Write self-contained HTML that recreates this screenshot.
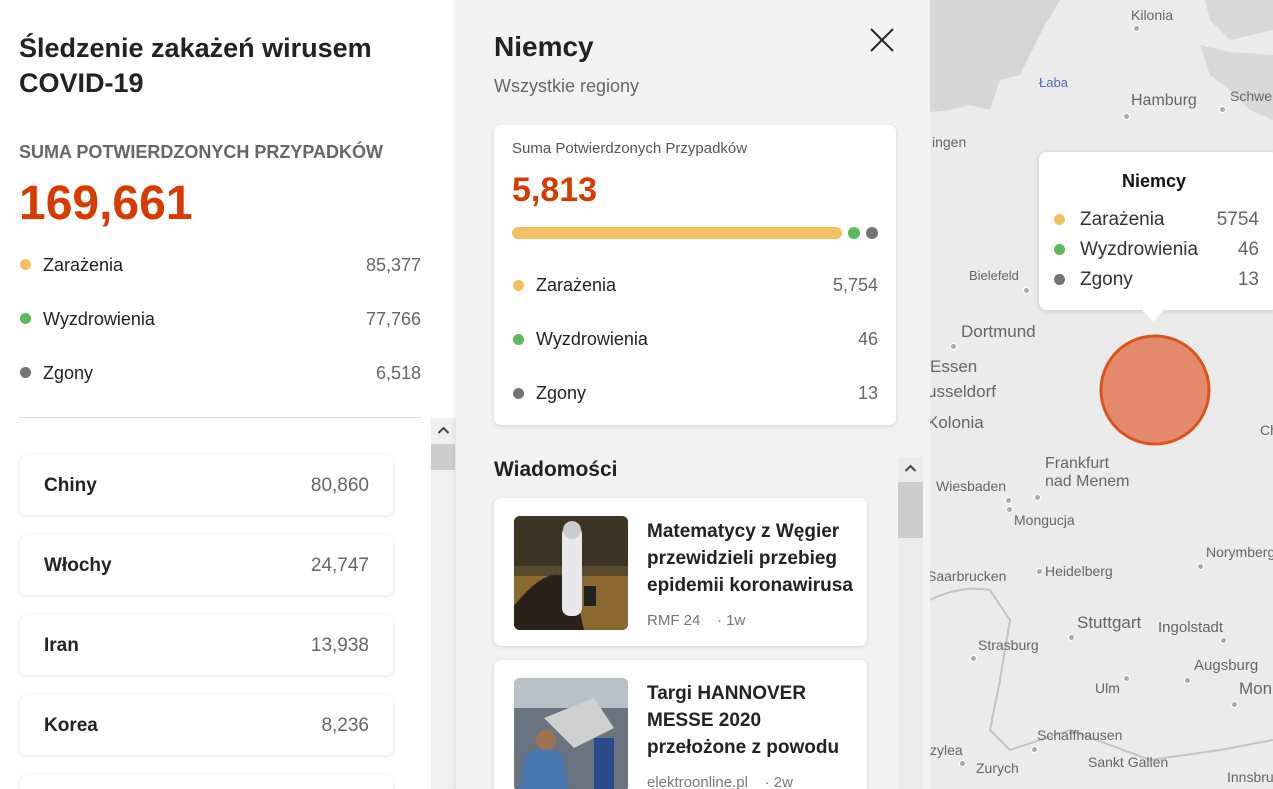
<!DOCTYPE html>
<html><head><meta charset="utf-8"><style>
*{margin:0;padding:0;box-sizing:border-box}
html,body{width:1273px;height:789px;overflow:hidden}
body{position:relative;font-family:"Liberation Sans",sans-serif;background:#fff;color:#222}
#w{position:absolute;left:0;top:0;width:1273px;height:789px;overflow:hidden}
.a{position:absolute;white-space:nowrap}
.dot{position:absolute;width:11px;height:11px;border-radius:50%}
.y{background:#f2bf5e}.g{background:#5cb85c}.k{background:#737373}
.card{position:absolute;background:#fff;border-radius:7px;box-shadow:0 1px 4px rgba(0,0,0,.13)}
.gray{color:#666}
.ml{position:absolute;font-size:15px;color:#666;white-space:nowrap}
.cd{position:absolute;width:7px;height:7px;border-radius:50%;background:#aaa;border:1.5px solid #fff}
</style></head><body><div id="w">
<!-- left panel -->
<div class="a" style="left:19px;top:31px;font-size:27px;font-weight:bold;line-height:35px;color:#222">Śledzenie zakażeń wirusem<br>COVID-19</div>
<div class="a" style="left:19px;top:142px;font-size:18px;font-weight:bold;color:#666">SUMA POTWIERDZONYCH PRZYPADKÓW</div>
<div class="a" style="left:19px;top:176px;font-size:48px;font-weight:bold;color:#d83b01">169,661</div>
<div class="dot y" style="left:20px;top:259px"></div><div class="a" style="left:43px;top:255px;font-size:18px">Zarażenia</div><div class="a gray" style="right:852px;top:255px;font-size:18px">85,377</div>
<div class="dot g" style="left:20px;top:313px"></div><div class="a" style="left:43px;top:309px;font-size:18px">Wyzdrowienia</div><div class="a gray" style="right:852px;top:309px;font-size:18px">77,766</div>
<div class="dot k" style="left:20px;top:367px"></div><div class="a" style="left:43px;top:363px;font-size:18px">Zgony</div><div class="a gray" style="right:852px;top:363px;font-size:18px">6,518</div>
<div class="a" style="left:19px;top:417px;width:402px;height:1px;background:#ddd"></div>
<div class="a" style="left:431px;top:418px;width:25px;height:371px;background:#f0f0f0"></div>
<svg class="a" style="left:437px;top:426px" width="13" height="9"><path d="M1.5 7L6.5 2L11.5 7" stroke="#444" stroke-width="2" fill="none"/></svg>
<div class="a" style="left:431px;top:444px;width:24px;height:26px;background:#cdcdcd"></div>
<div class="card" style="left:20px;top:455px;width:373px;height:60px"><span class="a" style="left:24px;top:20px;font-size:19px;font-weight:bold">Chiny</span><span class="a gray" style="right:24px;top:20px;font-size:19px">80,860</span></div>
<div class="card" style="left:20px;top:535px;width:373px;height:60px"><span class="a" style="left:24px;top:20px;font-size:19px;font-weight:bold">Włochy</span><span class="a gray" style="right:24px;top:20px;font-size:19px">24,747</span></div>
<div class="card" style="left:20px;top:615px;width:373px;height:60px"><span class="a" style="left:24px;top:20px;font-size:19px;font-weight:bold">Iran</span><span class="a gray" style="right:24px;top:20px;font-size:19px">13,938</span></div>
<div class="card" style="left:20px;top:695px;width:373px;height:60px"><span class="a" style="left:24px;top:20px;font-size:19px;font-weight:bold">Korea</span><span class="a gray" style="right:24px;top:20px;font-size:19px">8,236</span></div>
<div class="card" style="left:20px;top:775px;width:373px;height:14px;border-radius:7px 7px 0 0"></div>
<!-- middle panel -->
<div class="a" style="left:456px;top:0;width:474px;height:789px;background:#f3f3f3;box-shadow:-2px 0 4px rgba(0,0,0,.06)"></div>
<div class="a" style="left:494px;top:31px;font-size:28px;font-weight:bold;color:#222">Niemcy</div>
<div class="a" style="left:494px;top:76px;font-size:18px;color:#666">Wszystkie regiony</div>
<svg class="a" style="left:869px;top:27px" width="26" height="26"><path d="M2 2L24 24M24 2L2 24" stroke="#222" stroke-width="2"/></svg>
<div class="card" style="left:494px;top:125px;width:402px;height:300px">
<div class="a" style="left:18px;top:15px;font-size:15px;color:#555">Suma Potwierdzonych Przypadków</div>
<div class="a" style="left:18px;top:46px;font-size:34px;font-weight:bold;color:#d83b01">5,813</div>
<div class="a" style="left:18px;top:102px;width:330px;height:12px;border-radius:6px;background:#f2c060"></div>
<div class="dot g" style="left:354px;top:102px;width:12px;height:12px"></div>
<div class="dot k" style="left:372px;top:102px;width:12px;height:12px"></div>
<div class="dot y" style="left:19px;top:155px"></div><div class="a" style="left:42px;top:150px;font-size:18px">Zarażenia</div><div class="a gray" style="right:18px;top:150px;font-size:18px">5,754</div>
<div class="dot g" style="left:19px;top:209px"></div><div class="a" style="left:42px;top:204px;font-size:18px">Wyzdrowienia</div><div class="a gray" style="right:18px;top:204px;font-size:18px">46</div>
<div class="dot k" style="left:19px;top:263px"></div><div class="a" style="left:42px;top:258px;font-size:18px">Zgony</div><div class="a gray" style="right:18px;top:258px;font-size:18px">13</div>
</div>
<div class="a" style="left:494px;top:458px;font-size:21px;font-weight:bold;color:#222">Wiadomości</div>
<div class="a" style="left:898px;top:457px;width:25px;height:332px;background:#ececec"></div>
<svg class="a" style="left:904px;top:464px" width="13" height="9"><path d="M1.5 7L6.5 2L11.5 7" stroke="#444" stroke-width="2" fill="none"/></svg>
<div class="a" style="left:898px;top:482px;width:25px;height:56px;background:#cdcdcd"></div>
<div class="card" style="left:494px;top:498px;width:373px;height:148px">
<svg class="a" style="left:20px;top:18px;border-radius:6px" width="114" height="114"><rect width="114" height="114" fill="#5a4a2c"/><rect y="0" width="114" height="50" fill="#3e3424"/><rect y="60" width="114" height="54" fill="#8a6a30"/><path d="M0 90Q40 40 60 70L70 114H0Z" fill="#2a2218"/><rect x="48" y="10" width="20" height="90" rx="8" fill="#e8e8ec"/><circle cx="58" cy="14" r="9" fill="#ccc"/><rect x="70" y="70" width="12" height="20" fill="#222"/></svg>
<div class="a" style="left:153px;top:20px;font-size:19px;font-weight:bold;line-height:27px;color:#222">Matematycy z Węgier<br>przewidzieli przebieg<br>epidemii koronawirusa</div>
<div class="a" style="left:153px;top:114px;font-size:15px;color:#777">RMF 24 &nbsp;&nbsp; · 1w</div>
</div>
<div class="card" style="left:494px;top:660px;width:373px;height:148px">
<svg class="a" style="left:20px;top:18px;border-radius:6px" width="114" height="114"><rect width="114" height="114" fill="#6a7480"/><rect width="114" height="30" fill="#b8c0c8"/><path d="M30 40L80 20L100 50L60 70Z" fill="#d0d0d0"/><path d="M10 80Q30 60 50 80L55 114H5Z" fill="#4a78b0"/><circle cx="32" cy="62" r="10" fill="#a07050"/><rect x="80" y="60" width="20" height="54" fill="#2a4a8a"/></svg>
<div class="a" style="left:153px;top:20px;font-size:19px;font-weight:bold;line-height:27px;color:#222">Targi HANNOVER<br>MESSE 2020<br>przełożone z powodu</div>
<div class="a" style="left:153px;top:114px;font-size:15px;color:#777">elektroonline.pl &nbsp;&nbsp; · 2w</div>
</div>
<!-- map -->
<div class="a" style="left:930px;top:0;width:343px;height:789px;background:#ebebeb;overflow:hidden">
<svg width="343" height="789" style="position:absolute;left:0;top:0">
<path d="M0 0H130L115 25L100 55L90 75L70 80L60 110L40 105L20 110L0 112Z" fill="#d6d6d6"/>
<path d="M215 0H275L280 20L300 40L343 30V0Z" fill="#d8d8d8"/>
<path d="M270 45L300 52L343 55V120L320 110L300 90L280 75Z" fill="#d8d8d8"/>
<path d="M0 600Q30 585 60 590L80 620L70 680L60 730L80 750L140 730L220 760L290 750L343 740" stroke="#c4c4c4" stroke-width="2" fill="none"/>
</svg>
<span class="ml" style="left:201px;top:7px;font-size:14px">Kilonia</span><div class="cd" style="left:203px;top:25px"></div>
<span class="ml" style="left:109px;top:75px;font-size:13px;color:#4a6bb5">Łaba</span>
<span class="ml" style="left:201px;top:92px;font-size:16px">Hamburg</span><div class="cd" style="left:193px;top:113px"></div>
<span class="ml" style="left:300px;top:88px;font-size:14px">Schwe</span><div class="cd" style="left:289px;top:106px"></div>
<span class="ml" style="left:2px;top:134px;font-size:14px">ingen</span>
<span class="ml" style="left:39px;top:268px;font-size:13px">Bielefeld</span><div class="cd" style="left:93px;top:287px"></div>
<span class="ml" style="left:31px;top:322px;font-size:17px">Dortmund</span><div class="cd" style="left:20px;top:343px"></div>
<span class="ml" style="left:0;top:357px;font-size:17px">Essen</span>
<span class="ml" style="left:-3px;top:382px;font-size:17px">usseldorf</span>
<span class="ml" style="left:-3px;top:413px;font-size:17px">Kolonia</span>
<span class="ml" style="left:330px;top:422px;font-size:14px">Ch</span>
<span class="ml" style="left:115px;top:455px;font-size:16px;line-height:18px">Frankfurt<br>nad Menem</span><div class="cd" style="left:104px;top:494px"></div>
<span class="ml" style="left:6px;top:478px;font-size:14px">Wiesbaden</span><div class="cd" style="left:75px;top:497px"></div><div class="cd" style="left:76px;top:506px"></div>
<span class="ml" style="left:84px;top:512px;font-size:14px">Mongucja</span>
<span class="ml" style="left:276px;top:544px;font-size:14px">Norymberg</span><div class="cd" style="left:267px;top:563px"></div>
<span class="ml" style="left:-3px;top:568px;font-size:14px">Saarbrucken</span>
<span class="ml" style="left:115px;top:563px;font-size:14px">Heidelberg</span><div class="cd" style="left:106px;top:568px"></div>
<span class="ml" style="left:147px;top:613px;font-size:17px">Stuttgart</span><div class="cd" style="left:138px;top:634px"></div>
<span class="ml" style="left:228px;top:619px;font-size:15px">Ingolstadt</span><div class="cd" style="left:290px;top:637px"></div>
<span class="ml" style="left:48px;top:637px;font-size:14px">Strasburg</span><div class="cd" style="left:40px;top:655px"></div>
<span class="ml" style="left:264px;top:657px;font-size:15px">Augsburg</span><div class="cd" style="left:254px;top:677px"></div>
<span class="ml" style="left:309px;top:679px;font-size:17px">Mon</span><div class="cd" style="left:301px;top:701px"></div>
<span class="ml" style="left:165px;top:680px;font-size:14px">Ulm</span><div class="cd" style="left:193px;top:675px"></div>
<span class="ml" style="left:107px;top:727px;font-size:14px">Schaffhausen</span><div class="cd" style="left:101px;top:746px"></div>
<span class="ml" style="left:0;top:742px;font-size:14px">zylea</span><div class="cd" style="left:29px;top:760px"></div>
<span class="ml" style="left:46px;top:760px;font-size:14px">Zurych</span>
<span class="ml" style="left:158px;top:754px;font-size:14px">Sankt Gallen</span>
<span class="ml" style="left:297px;top:769px;font-size:14px">Innsbru</span>
<svg style="position:absolute;left:168px;top:333px" width="116" height="116"><circle cx="57" cy="57" r="54" fill="#e58a6c" stroke="#d9541e" stroke-width="3"/></svg>
<div class="a" style="left:109px;top:152px;width:240px;height:158px;background:#fff;border-radius:8px;box-shadow:0 1px 6px rgba(0,0,0,.15)"></div>
<div class="a" style="left:215px;top:302px;width:16px;height:16px;background:#fff;transform:rotate(45deg)"></div>
<div class="a" style="left:192px;top:171px;font-size:18px;font-weight:bold;color:#111">Niemcy</div>
<div class="dot y" style="left:124px;top:214px"></div><div class="a" style="left:150px;top:209px;font-size:19px;color:#333">Zarażenia</div><div class="a gray" style="right:14px;top:209px;font-size:19px">5754</div>
<div class="dot g" style="left:124px;top:244px"></div><div class="a" style="left:150px;top:239px;font-size:19px;color:#333">Wyzdrowienia</div><div class="a gray" style="right:14px;top:239px;font-size:19px">46</div>
<div class="dot k" style="left:124px;top:274px"></div><div class="a" style="left:150px;top:269px;font-size:19px;color:#333">Zgony</div><div class="a gray" style="right:14px;top:269px;font-size:19px">13</div>
</div>
</div></body></html>
